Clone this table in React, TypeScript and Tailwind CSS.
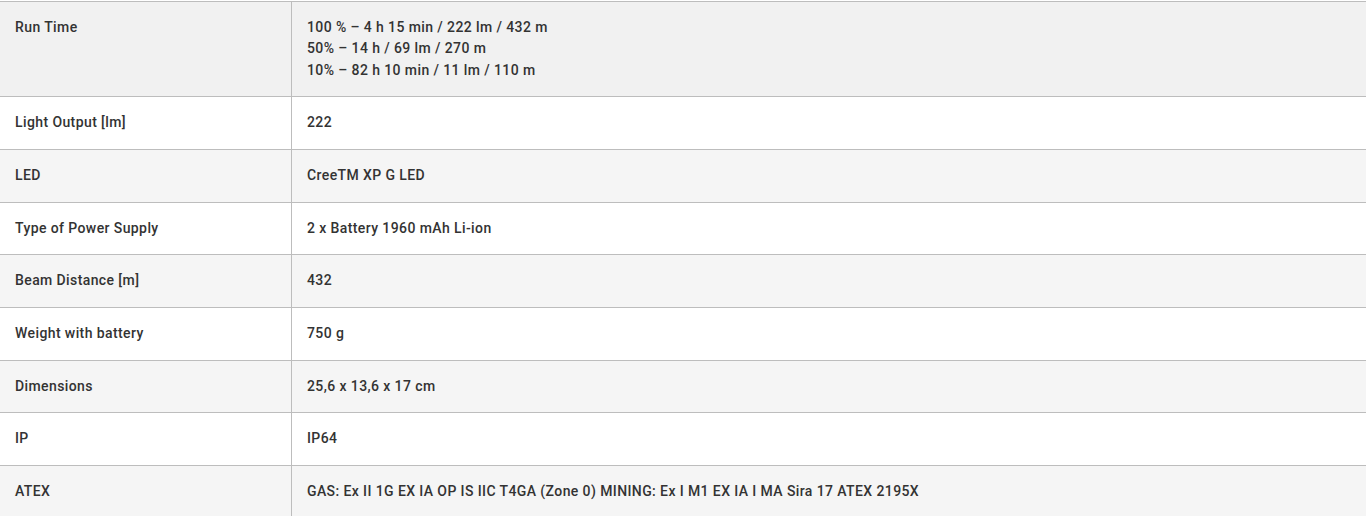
import React from 'react';

const rows: { label: string; value: string[] }[] = [
  { label: 'Run Time', value: ['100 % – 4 h 15 min / 222 lm / 432 m', '50% – 14 h / 69 lm / 270 m', '10% – 82 h 10 min / 11 lm / 110 m'] },
  { label: 'Light Output [lm]', value: ['222'] },
  { label: 'LED', value: ['CreeTM XP G LED'] },
  { label: 'Type of Power Supply', value: ['2 x Battery 1960 mAh Li-ion'] },
  { label: 'Beam Distance [m]', value: ['432'] },
  { label: 'Weight with battery', value: ['750 g'] },
  { label: 'Dimensions', value: ['25,6 x 13,6 x 17 cm'] },
  { label: 'IP', value: ['IP64'] },
  { label: 'ATEX', value: ['GAS: Ex II 1G EX IA OP IS IIC T4GA (Zone 0) MINING: Ex I M1 EX IA I MA Sira 17 ATEX 2195X'] },
];

export default function App() {
  return (
    <div className="w-[1366px] h-[516px] overflow-hidden bg-white pt-px font-['Roboto',sans-serif] text-[14px] font-medium tracking-[0.4px] text-[#333333]">
      <div className="border-t border-[#bdbdbd]">
        {rows.map((row, i) => (
          <div
            key={row.label}
            className={`flex border-b border-[#bdbdbd] ${i === 0 ? 'bg-[#f1f1f1] leading-[21.4px]' : i % 2 === 0 ? 'bg-[#f5f5f5] leading-[21.7px]' : 'bg-white leading-[21.7px]'}`}
          >
            <div className="w-[291px] shrink-0 p-[15px]">{row.label}</div>
            <div className="flex-1 border-l border-[#bdbdbd] p-[15px]">
              {row.value.map((v) => (
                <div key={v}>{v}</div>
              ))}
            </div>
          </div>
        ))}
      </div>
    </div>
  );
}
